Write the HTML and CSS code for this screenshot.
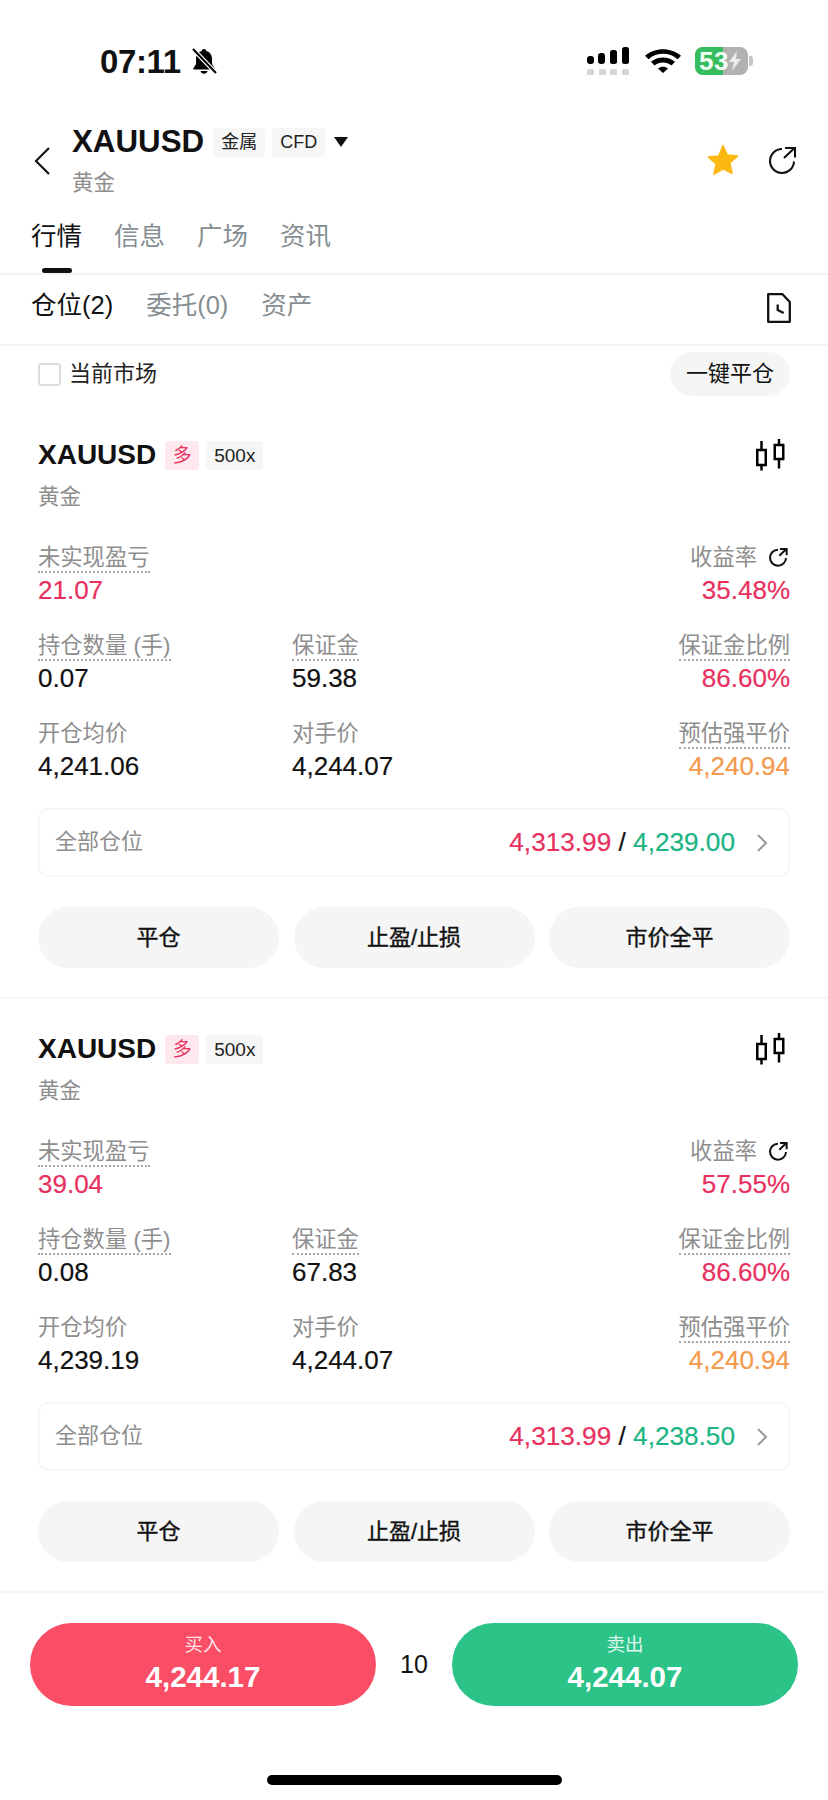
FILE: index.html
```html
<!DOCTYPE html>
<html lang="zh">
<head>
<meta charset="utf-8">
<title>XAUUSD</title>
<link rel="stylesheet" href="styles.css">
</head>
<body>
<div class="page">
  <div class="status">
    <div class="status-left">
      <span class="clock">07:11</span>
      <svg class="bell" viewBox="0 0 28 28" width="28" height="28"><path d="M14 2c1.300 0 2.200.9 2.400 2 3.600 1 5.600 4 5.600 8v5l2.600 4.200c.4.7 0 1.300-.7 1.300H4.100c-.7 0-1.100-.6-.7-1.300L6 17v-5c0-4 2-7 5.600-8 .2-1.100 1.100-2 2.400-2zM10.500 24h7c-.3 1.700-1.800 2.800-3.500 2.800s-3.200-1.100-3.500-2.800z" fill="#000"/><path d="M3 2l23 24" stroke="#fff" stroke-width="4.500"/><path d="M3 2l23 24" stroke="#000" stroke-width="2"/></svg>
    </div>
    <div class="status-right">
      <svg class="signal" viewBox="0 0 42 30" width="42" height="30"><rect x="0" y="9" width="7" height="8" rx="3" /><rect x="11" y="6" width="7" height="11" rx="3"/><rect x="23" y="3" width="7" height="14" rx="2.500"/><rect x="35" y="0" width="7" height="17" rx="2.500"/><g class="signal-dim"><rect x="0" y="22" width="7" height="6" rx="1.500"/><rect x="12" y="22" width="7" height="6" rx="1.500"/><rect x="23" y="22" width="7" height="6" rx="1.500"/><rect x="35" y="22" width="7" height="6" rx="1.500"/></g></svg>
      <svg class="wifi" viewBox="0 0 36 26" width="36" height="26"><path d="M18 21l-5-4.500c3-2.400 7-2.400 10 0z M9.500 13.500L6 9.800c6.800-5.800 17.200-5.800 24 0l-3.500 3.700c-4.900-4.100-12.100-4.100-17 0z M3.500 7.300L0 3.700C10-5 26-5 36 3.700l-3.500 3.600C24.300 0 11.700 0 3.500 7.300z" transform="translate(0 4)"/></svg>
      <div class="battery">
        <div class="battery-body"><span class="battery-fill"></span><span class="battery-num">53</span>
          <svg class="bolt" viewBox="0 0 12 20" width="12" height="20"><path d="M8 0L0 11h5l-2 9 9-12H7z" fill="#ececec"/></svg>
        </div>
        <span class="battery-cap"></span>
      </div>
    </div>
  </div>

  <header class="head">
    <svg class="back" viewBox="0 0 18 30" width="18" height="30"><path d="M16 2L3 15l13 13" fill="none" stroke="#111" stroke-width="2.200"/></svg>
    <div class="head-main">
      <div class="head-title">
        <span class="symbol-lg">XAUUSD</span>
        <span class="tag">金属</span>
        <span class="tag tag-cfd">CFD</span>
        <span class="caret"></span>
      </div>
      <div class="sub">黄金</div>
    </div>
    <svg class="star" viewBox="0 0 32 32" width="32" height="32"><path d="M16 1.500l4.300 9.600 10.200 1-7.700 6.900 2.300 10.300L16 24.900l-9.100 5.400 2.300-10.300-7.700-6.900 10.200-1z" fill="#fdb913" stroke="#fdb913" stroke-linejoin="round" stroke-width="1.500"/></svg>
    <svg class="share" viewBox="0 0 30 30" width="30" height="30"><path d="M15 4a12 12 0 1 0 12 12.500" fill="none" stroke="#111" stroke-width="2.100"/><path d="M17 13L27.500 3M18 3h10v9.500" fill="none" stroke="#111" stroke-width="2.100"/></svg>
  </header>

  <nav class="tabs">
    <span class="tab tab-on">行情</span><span class="tab">信息</span><span class="tab">广场</span><span class="tab">资讯</span>
  </nav>

  <div class="subtabs">
    <span class="subtab subtab-on">仓位(2)</span><span class="subtab">委托(0)</span><span class="subtab">资产</span>
    <svg class="doc" viewBox="0 0 24 30" width="24" height="30"><path d="M1.200 1.200h14.300l7.300 7.800v19.800H1.200z" fill="none" stroke="#111" stroke-width="2.300" stroke-linejoin="round"/><path d="M10.700 11.500v5.500l6 3" fill="none" stroke="#111" stroke-width="2.300"/></svg>
  </div>

  <div class="filter">
    <label class="check"><span class="box"></span>当前市场</label>
    <span class="close-all">一键平仓</span>
  </div>

  <section class="card">
    <div class="card-top">
      <span class="symbol">XAUUSD</span><span class="side">多</span><span class="lev">500x</span>
      <svg class="candle" viewBox="0 0 30 32" width="30" height="32"><path d="M5.500 2v9M5.500 26v5.500M23 0v6M23 20v9.500" stroke="#000" stroke-width="2.500"/><rect x="1.250" y="11" width="8.500" height="15" fill="none" stroke="#000" stroke-width="2.500"/><rect x="18.750" y="6" width="8.500" height="14" fill="none" stroke="#000" stroke-width="2.500"/></svg>
    </div>
    <div class="sub sub-card">黄金</div>
    <div class="grid">
      <div class="cell"><span class="lbl dotted">未实现盈亏</span><span class="val red">21.07</span></div>
      <div class="cell"></div>
      <div class="cell right"><span class="lbl">收益率<svg class="share-sm" viewBox="0 0 30 30" width="20" height="20"><path d="M15 4a12 12 0 1 0 12 12.500" fill="none" stroke="#111" stroke-width="3"/><path d="M17 13L27.500 3M18 3h10v9.500" fill="none" stroke="#111" stroke-width="3"/></svg></span><span class="val red">35.48%</span></div>
      <div class="cell"><span class="lbl dotted">持仓数量 (手)</span><span class="val">0.07</span></div>
      <div class="cell"><span class="lbl dotted">保证金</span><span class="val">59.38</span></div>
      <div class="cell right"><span class="lbl dotted">保证金比例</span><span class="val red">86.60%</span></div>
      <div class="cell"><span class="lbl">开仓均价</span><span class="val">4,241.06</span></div>
      <div class="cell"><span class="lbl">对手价</span><span class="val">4,244.07</span></div>
      <div class="cell right"><span class="lbl dotted">预估强平价</span><span class="val orange">4,240.94</span></div>
    </div>
    <div class="all-row">
      <span class="all-lbl">全部仓位</span>
      <span class="all-val"><span class="red">4,313.99</span> / <span class="green">4,239.00</span></span>
      <svg class="chev" viewBox="0 0 12 20" width="12" height="20"><path d="M2 2l8 8-8 8" fill="none" stroke="#999" stroke-width="2"/></svg>
    </div>
    <div class="actions"><span class="act">平仓</span><span class="act">止盈/止损</span><span class="act">市价全平</span></div>
  </section>

  <section class="card card-2">
    <div class="card-top">
      <span class="symbol">XAUUSD</span><span class="side">多</span><span class="lev">500x</span>
      <svg class="candle" viewBox="0 0 30 32" width="30" height="32"><path d="M5.500 2v9M5.500 26v5.500M23 0v6M23 20v9.500" stroke="#000" stroke-width="2.500"/><rect x="1.250" y="11" width="8.500" height="15" fill="none" stroke="#000" stroke-width="2.500"/><rect x="18.750" y="6" width="8.500" height="14" fill="none" stroke="#000" stroke-width="2.500"/></svg>
    </div>
    <div class="sub sub-card">黄金</div>
    <div class="grid">
      <div class="cell"><span class="lbl dotted">未实现盈亏</span><span class="val red">39.04</span></div>
      <div class="cell"></div>
      <div class="cell right"><span class="lbl">收益率<svg class="share-sm" viewBox="0 0 30 30" width="20" height="20"><path d="M15 4a12 12 0 1 0 12 12.500" fill="none" stroke="#111" stroke-width="3"/><path d="M17 13L27.500 3M18 3h10v9.500" fill="none" stroke="#111" stroke-width="3"/></svg></span><span class="val red">57.55%</span></div>
      <div class="cell"><span class="lbl dotted">持仓数量 (手)</span><span class="val">0.08</span></div>
      <div class="cell"><span class="lbl dotted">保证金</span><span class="val">67.83</span></div>
      <div class="cell right"><span class="lbl dotted">保证金比例</span><span class="val red">86.60%</span></div>
      <div class="cell"><span class="lbl">开仓均价</span><span class="val">4,239.19</span></div>
      <div class="cell"><span class="lbl">对手价</span><span class="val">4,244.07</span></div>
      <div class="cell right"><span class="lbl dotted">预估强平价</span><span class="val orange">4,240.94</span></div>
    </div>
    <div class="all-row">
      <span class="all-lbl">全部仓位</span>
      <span class="all-val"><span class="red">4,313.99</span> / <span class="green">4,238.50</span></span>
      <svg class="chev" viewBox="0 0 12 20" width="12" height="20"><path d="M2 2l8 8-8 8" fill="none" stroke="#999" stroke-width="2"/></svg>
    </div>
    <div class="actions"><span class="act">平仓</span><span class="act">止盈/止损</span><span class="act">市价全平</span></div>
  </section>

  <footer class="trade">
    <div class="trade-btn buy"><span class="trade-lbl">买入</span><span class="trade-price">4,244.17</span></div>
    <span class="spread">10</span>
    <div class="trade-btn sell"><span class="trade-lbl">卖出</span><span class="trade-price">4,244.07</span></div>
  </footer>
  <div class="home-wrap"><span class="home"></span></div>
</div>
</body>
</html>
```
FILE: styles.css
```css
* { box-sizing: border-box; }
html, body { margin: 0; padding: 0; background: #fff; }
body { font-family: "Liberation Sans", "Noto Sans CJK SC", sans-serif; color: #111; }
.page { width: 828px; height: 1800px; overflow: hidden; display: flex; flex-direction: column; }

.status { height: 96px; display: flex; justify-content: space-between; padding: 43px 75px 0 100px; flex: none; }
.status-left { display: flex; align-items: flex-start; gap: 9px; }
.clock { font-size: 33px; line-height: 38px; font-weight: 700; color: #111; letter-spacing: -.4px; }
.bell { margin-top: 4px; }
.status-right { display: flex; align-items: flex-start; }
.signal { fill: #000; margin: 4px 16px 0 0; }
.signal-dim { fill: #d4d4d4; }
.wifi { margin: 5px 14px 0 0; }
.battery { display: flex; align-items: center; margin-top: 4px; }
.battery-body { position: relative; width: 53px; height: 28px; background: #b2b2b2; border-radius: 8px; overflow: hidden; display: flex; align-items: center; }
.battery-fill { position: absolute; left: 0; top: 0; bottom: 0; width: 28px; background: #36bd5f; }
.battery-num { position: relative; margin-left: 4px; font-size: 26px; line-height: 28px; font-weight: 700; color: #f2fff5; letter-spacing: .5px; }
.bolt { position: relative; margin-left: 0; }
.battery-cap { width: 4px; height: 10px; background: #c4c4c4; border-radius: 0 3px 3px 0; margin-left: 1px; }

.head { display: flex; height: 98px; padding: 28px 31px 0 33px; flex: none; }
.back { margin: 22px 21px 0 0; }
.head-main { flex: 1; }
.head-title { display: flex; align-items: center; height: 36px; }
.symbol-lg { font-size: 31.300px; line-height: 38px; font-weight: 700; color: #111; }
.tag { margin-left: 9px; height: 29px; padding: 0 8px; font-size: 18px; line-height: 29px; background: #f6f6f6; border-radius: 3px; color: #222; }
.tag-cfd { margin-left: 7px; font-size: 18px; }
.caret { margin-left: 9px; border-left: 7px solid transparent; border-right: 7px solid transparent; border-top: 10px solid #111; }
.sub { font-size: 21.500px; line-height: 30px; color: #8e8e8e; }
.head .sub { margin-top: 8px; }
.star { margin: 20px 28px 0 0; }
.share { margin: 21px 0 0 0; }

.tabs { display: flex; gap: 27px; height: 81px; padding: 24px 0 0 31px; border-bottom: 2px solid #f4f4f4; flex: none; }
.tab { position: relative; font-size: 25.500px; line-height: 36px; color: #868e92; width: 56px; }
.tab-on { color: #111; }
.tab-on::after { content: ""; position: absolute; left: 11px; bottom: 0; width: 30px; height: 5px; border-radius: 3px; background: #111; }

.subtabs { display: flex; align-items: flex-start; gap: 33px; height: 71px; padding: 12px 31px 0; border-bottom: 2px solid #f4f4f4; flex: none; }
.subtab { font-size: 25.500px; line-height: 36px; color: #868e92; }
.subtab-on { color: #111; }
.doc { margin-left: auto; margin-right: 6px; margin-top: 6px; }

.filter { display: flex; align-items: center; justify-content: space-between; height: 52px; padding: 0 38px; flex: none; margin-top: 2px; }
.check { display: flex; align-items: center; gap: 8px; font-size: 22px; line-height: 28px; color: #222; }
.box { width: 23px; height: 23px; border: 2px solid #dcdcdc; border-radius: 3px; }
.close-all { height: 44px; line-height: 44px; padding: 0 16px; border-radius: 22px; background: #f5f5f5; font-size: 22px; color: #111; }

.card { padding: 39px 38px 0; height: 597px; flex: none; }
.card-2 { border-top: 2px solid #f5f5f5; padding-top: 34px; height: 594px; }
.card-top { display: flex; align-items: center; height: 32px; }
.symbol { font-size: 28px; font-weight: 700; line-height: 32px; color: #111; }
.side { margin-left: 9px; width: 34px; height: 29px; background: #fde8ee; border-radius: 3px; color: #e8305f; font-size: 19px; line-height: 29px; text-align: center; }
.lev { margin-left: 7px; height: 29px; padding: 0 8px; background: #f6f6f6; border-radius: 3px; font-size: 19px; line-height: 29px; color: #222; }
.candle { margin-left: auto; margin-right: 4px; }
.sub-card { margin-top: 11px; }
.grid { display: grid; grid-template-columns: 254px 1fr auto; margin-top: 32px; }
.cell { display: flex; flex-direction: column; align-items: flex-start; height: 88px; }
.cell.right { align-items: flex-end; }
.lbl { font-size: 22.300px; height: 29px; padding-bottom: 6px; color: #8e8e8e; display: flex; align-items: center; border-bottom: 2px solid transparent; }
.lbl.dotted { border-bottom: 2px dotted #a6a6a6; }
.share-sm { margin: 5px 2px 0 11px; }
.val { font-size: 26px; line-height: 32px; margin-top: 1px; color: #111; -webkit-text-stroke: .2px currentColor; }
.red { color: #e8305f; }
.green { color: #1bb583; }
.orange { color: #f49a4c; }

.all-row { display: flex; align-items: center; height: 69px; padding: 0 20px 0 15px; border: 2px solid #f6f6f6; border-radius: 10px; }
.all-lbl { font-size: 22px; line-height: 30px; margin-bottom: 2px; color: #8e8e8e; }
.all-val { margin-left: auto; margin-right: 21px; font-size: 26.200px; color: #111; -webkit-text-stroke: .2px currentColor; }
.actions { display: flex; justify-content: space-between; margin-top: 30px; }
.act { width: 241px; height: 61px; line-height: 61px; text-align: center; border-radius: 31px; background: #f5f5f5; font-size: 22px; color: #111; -webkit-text-stroke: .4px #111; }

.trade { display: flex; align-items: center; justify-content: space-between; padding: 30px 30px 0; flex: none; border-top: 2px solid #f5f5f5; }
.trade-btn { width: 346px; height: 83px; border-radius: 42px; display: flex; flex-direction: column; align-items: center; color: #fff; }
.buy { background: #fa4e66; }
.sell { background: #2cc389; }
.trade-lbl { font-size: 18.500px; line-height: 22px; margin-top: 11px; opacity: .85; }
.trade-price { font-size: 29.500px; line-height: 36px; font-weight: 700; margin-top: 3px; }
.spread { font-size: 25px; color: #111; }
.home-wrap { display: flex; justify-content: center; padding-top: 69px; flex: none; }
.home { width: 295px; height: 10px; border-radius: 5px; background: #000; }
```
